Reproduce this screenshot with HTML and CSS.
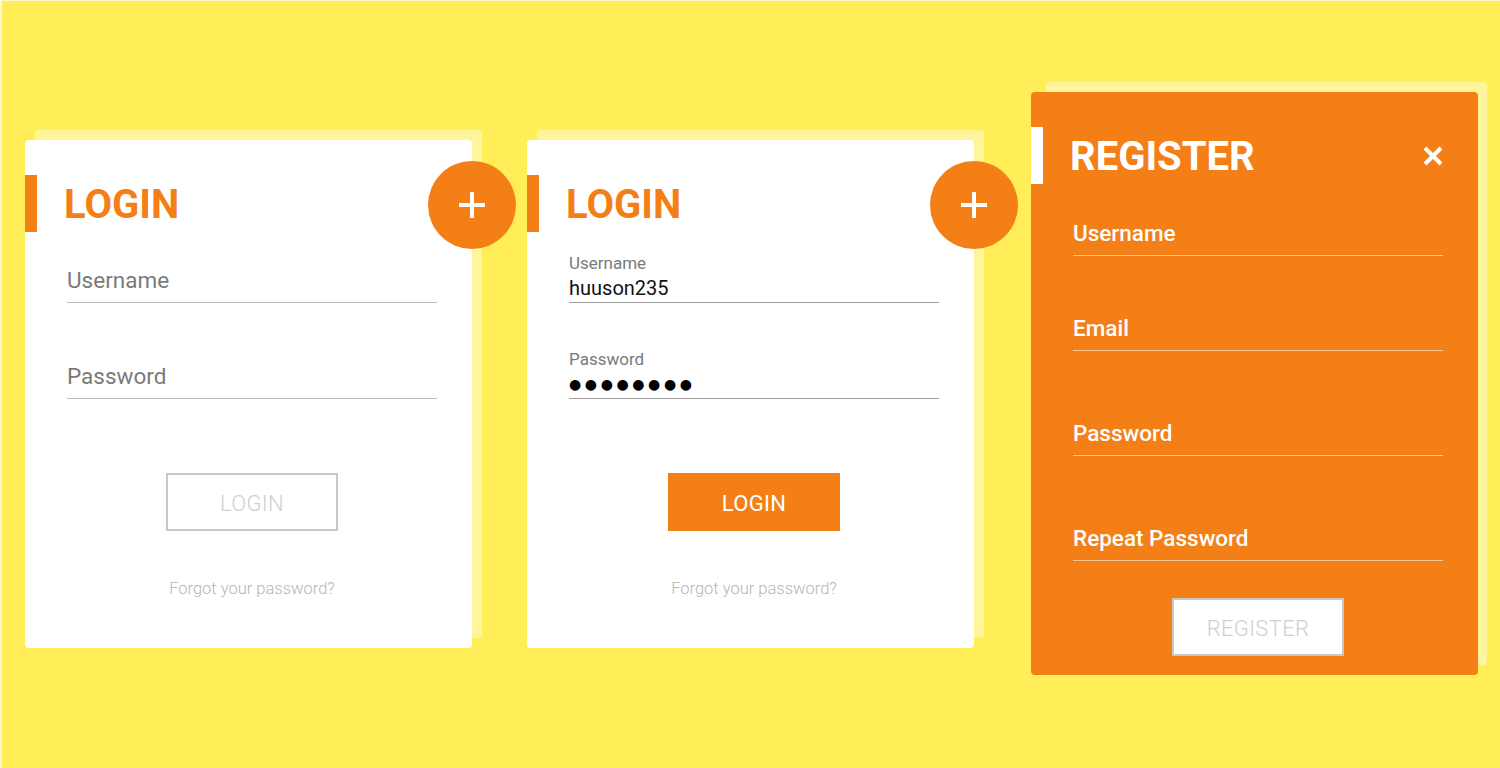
FILE: index.html
```html
<!DOCTYPE html>
<html lang="en">
<head>
<meta charset="utf-8">
<title>Login / Register</title>
<link rel="stylesheet" href="styles.css">
</head>
<body>
<main class="stage">
  <section class="panel panel-login">
    <div class="card">
      <header class="card-head">
        <span class="head-bar"></span>
        <h1 class="card-title">LOGIN</h1>
      </header>
      <button class="fab" type="button" aria-label="Register">
        <svg viewBox="0 0 26 26" width="26" height="26"><path d="M13 0v26M0 13h26" stroke="#fff" stroke-width="4"/></svg>
      </button>
      <div class="field">
        <span class="placeholder">Username</span>
      </div>
      <div class="field field-next">
        <span class="placeholder">Password</span>
      </div>
      <div class="actions">
        <button class="btn btn-outline" type="button">LOGIN</button>
      </div>
      <p class="forgot">Forgot your password?</p>
    </div>
  </section>

  <section class="panel panel-login">
    <div class="card">
      <header class="card-head">
        <span class="head-bar"></span>
        <h1 class="card-title">LOGIN</h1>
      </header>
      <button class="fab" type="button" aria-label="Register">
        <svg viewBox="0 0 26 26" width="26" height="26"><path d="M13 0v26M0 13h26" stroke="#fff" stroke-width="4"/></svg>
      </button>
      <div class="field field-filled">
        <span class="float-label">Username</span>
        <span class="value">huuson235</span>
      </div>
      <div class="field field-filled field-next">
        <span class="float-label">Password</span>
        <span class="value dots">●●●●●●●●</span>
      </div>
      <div class="actions">
        <button class="btn btn-solid" type="button">LOGIN</button>
      </div>
      <p class="forgot">Forgot your password?</p>
    </div>
  </section>

  <section class="panel panel-register">
    <div class="card card-orange">
      <header class="card-head">
        <span class="head-bar head-bar-white"></span>
        <h1 class="card-title title-white">REGISTER</h1>
        <button class="close" type="button" aria-label="Close">
          <svg viewBox="0 0 20 20" width="20" height="20"><path d="M2 2L18 18M18 2L2 18" stroke="#fff" stroke-width="4"/></svg>
        </button>
      </header>
      <div class="field field-light">
        <span class="placeholder light-label">Username</span>
      </div>
      <div class="field field-light reg-2">
        <span class="placeholder light-label">Email</span>
      </div>
      <div class="field field-light reg-3">
        <span class="placeholder light-label">Password</span>
      </div>
      <div class="field field-light reg-3">
        <span class="placeholder light-label">Repeat Password</span>
      </div>
      <div class="actions actions-reg">
        <button class="btn btn-outline btn-white" type="button">REGISTER</button>
      </div>
    </div>
  </section>
</main>
</body>
</html>
```

FILE: styles.css
```css
* { box-sizing: border-box; }

html, body {
  margin: 0;
  padding: 0;
  height: 100%;
}

body {
  background: #ffee58;
  font-family: Roboto, "Liberation Sans", Arial, sans-serif;
}

.stage {
  min-height: 768px;
  display: flex;
  align-items: flex-start;
  gap: 55px;
  padding-left: 23px;
  border-left: 2px solid #fff8cc;
  border-top: 1px solid #fff8cc;
}

.panel {
  position: relative;
  width: 447px;
}

.panel-login { margin-top: 139px; }
.panel-register { margin-top: 91px; margin-left: 2px; }

.panel::before {
  content: "";
  position: absolute;
  left: 10px;
  top: -10px;
  width: 447px;
  height: 100%;
  background: #fff59d;
  border-radius: 4px;
  z-index: 0;
}

.panel-register::before {
  left: 15px;
  width: 441px;
}

.card {
  position: relative;
  z-index: 1;
  background: #fff;
  border-radius: 4px;
  padding: 35px 35px 49px 0;
}

.card-orange {
  background: #f57f17;
  padding-bottom: 19px;
}

.card-head {
  height: 57px;
  display: flex;
  align-items: center;
}

.head-bar {
  width: 12px;
  height: 57px;
  background: #f57f17;
  flex: none;
}

.head-bar-white { background: #fff; }

.card-title {
  margin: 0 0 0 27px;
  font-size: 40px;
  font-weight: 700;
  line-height: 57px;
  padding-top: 2px;
  color: #f57f17;
  flex: 1;
}

.title-white { color: #fff; }

.close {
  border: 0;
  padding: 0;
  background: none;
  width: 20px;
  height: 20px;
  display: flex;
  margin-right: 0;
}

.fab {
  position: absolute;
  top: 21px;
  right: -44px;
  width: 88px;
  height: 88px;
  border-radius: 50%;
  border: 0;
  padding: 0;
  background: #f57f17;
  display: flex;
  align-items: center;
  justify-content: center;
  z-index: 2;
}

.field {
  margin-left: 42px;
  height: 71px;
  border-bottom: 1px solid #bdbdbd;
  display: flex;
  flex-direction: column;
  justify-content: flex-end;
  padding-bottom: 9px;
}

.field-next { margin-top: 25px; }

.placeholder {
  font-size: 22.5px;
  line-height: 26px;
  color: #7a7a7a;
}

.field-filled { padding-bottom: 2px; border-bottom-color: #9e9e9e; }

.float-label {
  font-size: 17px;
  line-height: 20px;
  color: #7a7a7a;
}

.value {
  margin-top: 3px;
  font-size: 20px;
  line-height: 24px;
  color: #111;
}

.dots {
  font-family: "DejaVu Sans", sans-serif;
  font-size: 14px;
  letter-spacing: 3.6px;
  color: #000;
}

.field-light {
  height: 72px;
  border-bottom-color: rgba(255, 255, 255, 0.55);
}

.light-label {
  color: #fff;
  font-weight: 500;
}

.reg-2 { margin-top: 23px; }
.reg-3 { margin-top: 33px; }

.actions {
  margin-left: 42px;
  margin-top: 74px;
  display: flex;
  justify-content: center;
}

.actions-reg { margin-top: 37px; }

.btn {
  width: 172px;
  height: 58px;
  font-family: inherit;
  font-size: 22px;
  letter-spacing: 0.3px;
  padding: 3px 0 0;
  cursor: pointer;
}

.btn-outline {
  background: #fff;
  border: 2px solid #c8c8c8;
  color: #cfcfcf;
  font-weight: 300;
}

.btn-white { background: #fff; }

.btn-solid {
  background: #f57f17;
  border: 0;
  color: #fff;
  font-weight: 400;
}

.forgot {
  margin: 48px 0 0 42px;
  text-align: center;
  font-size: 16.5px;
  line-height: 20px;
  font-weight: 300;
  color: #b5b5b5;
}
```
